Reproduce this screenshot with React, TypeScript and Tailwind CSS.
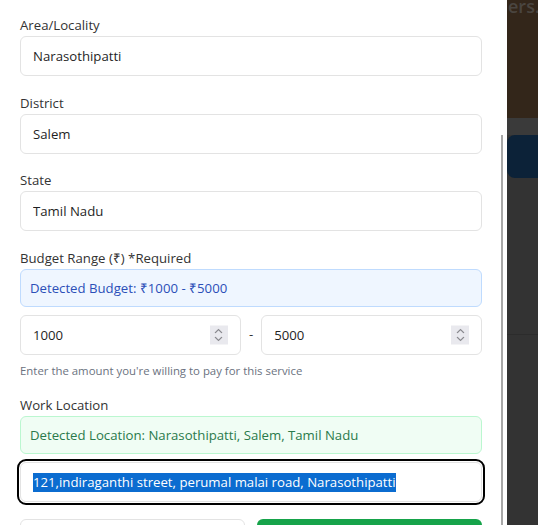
import { ReactNode } from 'react';

const inputClass =
  'h-10 w-full rounded-md border border-[#e3e3e3] bg-white px-3 text-[13.2px] text-[#1f1f1f] outline-none';

function Field({ label, children }: { label: string; children: ReactNode }) {
  return (
    <div>
      <label className="mb-px block h-5 text-[13.2px] leading-5 text-[#333]">{label}</label>
      {children}
    </div>
  );
}

function Spinner() {
  return (
    <div className="pointer-events-none absolute top-1/2 right-[13px] flex h-[19px] w-[18px] -translate-y-1/2 flex-col items-center justify-center gap-[3px] bg-[#e9e9ee]">
      <svg width="9" height="5" viewBox="0 0 9 5" fill="none">
        <path d="M1 4.5 4.5 1 8 4.5" stroke="#8a8a8f" strokeWidth="1.1" />
      </svg>
      <svg width="9" height="5" viewBox="0 0 9 5" fill="none">
        <path d="M1 0.5 4.5 4 8 0.5" stroke="#8a8a8f" strokeWidth="1.1" />
      </svg>
    </div>
  );
}

function NumberBox({ value }: { value: string }) {
  return (
    <div className="relative flex-1">
      <input readOnly value={value} className={inputClass} />
      <Spinner />
    </div>
  );
}

export default function App() {
  return (
    <div className="flex h-[525px] w-[538px] overflow-hidden font-['Open_Sans',sans-serif]">
      <div className="relative w-[507px] shrink-0 bg-white">
        <div className="flex flex-col gap-[16.5px] pt-[15px] pr-[25px] pl-5">
          <Field label="Area/Locality">
            <input readOnly value="Narasothipatti" className={inputClass} />
          </Field>
          <Field label="District">
            <input readOnly value="Salem" className={inputClass} />
          </Field>
          <Field label="State">
            <input readOnly value="Tamil Nadu" className={inputClass} />
          </Field>
          <div>
            <label className="mb-px block h-5 text-[13.2px] leading-5 text-[#333]">Budget Range (₹) *Required</label>
            <div className="rounded-md border border-[#bfdbfe] bg-[#eff6ff] px-[9px] py-2 text-[13.2px] leading-5 text-[#2b4fb8]">
              Detected Budget: ₹1000 - ₹5000
            </div>
            <div className="mt-2 flex items-center gap-2">
              <NumberBox value="1000" />
              <span className="text-[13.2px] text-[#333]">-</span>
              <NumberBox value="5000" />
            </div>
            <p className="mt-2 text-[11.4px] leading-4 text-[#6b7280]">Enter the amount you're willing to pay for this service</p>
          </div>
          <div>
            <label className="mb-px block h-5 text-[13.2px] leading-5 text-[#333]">Work Location</label>
            <div className="rounded-md border border-[#bbf7d0] bg-[#f0fdf4] px-[9px] py-2 text-[13.2px] leading-5 text-[#2a7a4b]">
              Detected Location: Narasothipatti, Salem, Tamil Nadu
            </div>
            <div className="mt-2 flex h-10 items-center rounded-md border border-[#e3e3e3] bg-white px-3 text-[13.2px] outline-2 outline-offset-[1px] outline-black">
              <span className="bg-[#0b6cd0] leading-[19px] text-white">
                121,indiraganthi street, perumal malai road, Narasothipatti
              </span>
            </div>
          </div>
          <div className="grid grid-cols-2 gap-3">
            <button className="h-10 rounded-md border border-[#e3e3e3] bg-white text-sm text-[#333]">Cancel</button>
            <button className="h-10 rounded-md bg-[#16a34a] text-sm font-semibold text-white">Submit</button>
          </div>
        </div>
        <div className="absolute top-[135px] right-[4px] bottom-0 w-[2px] bg-[#a8a8a8]" />
      </div>
      <div className="flex flex-1 flex-col bg-[#333333]">
        <div className="h-[118px] overflow-hidden bg-[#33261a]">
          <div className="-mt-[7px] pl-[1px] text-[18px] font-semibold whitespace-nowrap text-[#4a4540]">ers.</div>
        </div>
        <div className="h-[17px] bg-[#3a3a3a]" />
        <div className="h-[43px] rounded-l-lg bg-[#0c2238]" />
        <div className="h-[157px] border-b border-[#2c2c2c] bg-[#333333]" />
      </div>
    </div>
  );
}
